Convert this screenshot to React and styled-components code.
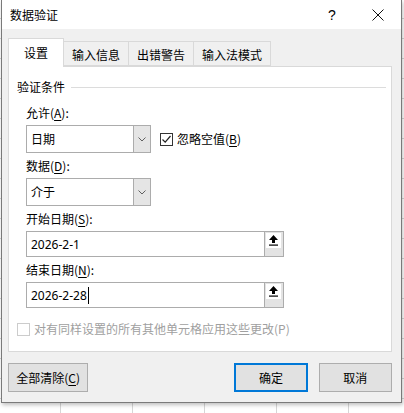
import React from 'react';
import styled, { createGlobalStyle } from 'styled-components';

const GlobalStyle = createGlobalStyle`
  body {
    margin: 0;
    font-family: "Noto Sans CJK SC", "Noto Sans", sans-serif;
    font-size: 12px;
    color: #000;
  }
  * { box-sizing: border-box; }
`;

const Sheet = styled.div`
  width: 404px;
  height: 413px;
  overflow: hidden;
  padding-left: 1px;
  background-color: #fff;
  background-image:
    linear-gradient(to right, #d6d6d6 1px, transparent 1px),
    linear-gradient(to bottom, #d6d6d6 1px, transparent 1px);
  background-size: 72px 20px;
  background-position: 60px 0, 0 18px;
`;

const Dialog = styled.div`
  width: 401px;
  height: 403px;
  display: flex;
  flex-direction: column;
  background: #f0f0f0;
  border: 1px solid #7a7a7a;
  border-top: 0;
  box-shadow: 1px 2px 4px rgba(0, 0, 0, 0.25);
`;

const TitleBar = styled.div`
  height: 29px;
  display: flex;
  align-items: center;
  background: #fff;
  padding-left: 8px;
`;

const Title = styled.div`
  flex: 1;
  line-height: 16px;
`;

const TitleButton = styled.div`
  width: 46px;
  height: 29px;
  display: flex;
  align-items: center;
  justify-content: center;
  font-size: 14px;
  font-family: "Liberation Sans", sans-serif;
`;

const Body = styled.div`
  flex: 1;
  padding: 9px 9px 0 6px;
`;

const TabRow = styled.div`
  display: flex;
  align-items: flex-end;
  height: 28px;
`;

const Tab = styled.div`
  position: relative;
  z-index: ${({ $active }) => ($active ? 1 : 0)};
  height: ${({ $active }) => ($active ? 29 : 25)}px;
  line-height: ${({ $active }) => ($active ? 27 : 25)}px;
  margin-bottom: ${({ $active }) => ($active ? -1 : 0)}px;
  margin-left: ${({ $first }) => ($first ? 0 : -1)}px;
  padding: 0 ${({ $active }) => ($active ? 15 : 8)}px;
  background: ${({ $active }) => ($active ? '#fff' : '#f0f0f0')};
  border: 1px solid #d9d9d9;
  border-bottom: ${({ $active }) => ($active ? 'none' : '1px solid #d9d9d9')};
`;

const Panel = styled.div`
  height: 286px;
  background: #fff;
  border: 1px solid #d9d9d9;
  padding-top: 12px;
`;

const GroupHeader = styled.div`
  display: flex;
  align-items: center;
  gap: 6px;
  padding: 0 5px 0 8px;
  line-height: 16px;
`;

const GroupLine = styled.div`
  flex: 1;
  height: 1px;
  background: #dcdcdc;
`;

const Fields = styled.div`
  padding-left: 17px;
`;

const Label = styled.div`
  line-height: 16px;
  margin-top: ${({ $first }) => ($first ? 10 : 5)}px;
`;

const Key = styled.span`
  text-decoration: underline;
  text-underline-offset: 2px;
`;

const Row = styled.div`
  display: flex;
  align-items: center;
  margin-top: 4px;
`;

const Select = styled.div`
  width: 125px;
  height: 28px;
  display: flex;
  border: 1px solid #acacac;
  background: #fff;
`;

const SelectValue = styled.div`
  flex: 1;
  padding-left: 4px;
  line-height: 26px;
`;

const DropButton = styled.div`
  width: 17px;
  display: flex;
  align-items: center;
  justify-content: center;
  background: #e5e5e5;
  border-left: 1px solid #acacac;
`;

const CheckLabel = styled.div`
  display: flex;
  align-items: center;
  gap: 4px;
  margin-left: ${({ $indent }) => $indent || 0}px;
  line-height: 16px;
  color: ${({ $disabled }) => ($disabled ? '#a0a0a0' : '#000')};
`;

const Box = styled.span`
  width: 13px;
  height: 13px;
  display: flex;
  align-items: center;
  justify-content: center;
  background: #fff;
  border: 1px solid ${({ $disabled }) => ($disabled ? '#cccccc' : '#333')};
`;

const Input = styled.div`
  width: 258px;
  height: 26px;
  display: flex;
  border: 1px solid #acacac;
  background: #fff;
`;

const InputText = styled.div`
  flex: 1;
  display: flex;
  align-items: center;
  padding-left: 4px;
  font-family: "Noto Sans", sans-serif;
  font-size: 12px;
`;

const Caret = styled.span`
  width: 1px;
  height: 17px;
  background: #000;
  margin-left: 1px;
`;

const RangeButton = styled.div`
  width: 19px;
  padding: 1px 2px 0 1px;
  background: #e3e3e3;
  border-left: 1px solid #acacac;
`;

const RangeTile = styled.div`
  height: 15px;
  display: flex;
  align-items: center;
  justify-content: center;
  background: #fff;
`;

const OptionRow = styled.div`
  margin-top: 13px;
  padding-left: 8px;
  display: flex;
`;

const Footer = styled.div`
  display: flex;
  margin-top: 11px;
`;

const Button = styled.div`
  width: ${({ $wide }) => ($wide ? 81 : 74)}px;
  height: 29px;
  display: flex;
  align-items: center;
  justify-content: center;
  background: #e1e1e1;
  border: ${({ $primary }) => ($primary ? '2px solid #0078d7' : '1px solid #adadad')};
  margin-left: ${({ $gap }) => $gap || 0}px;
`;

const Chevron = () => (
  <svg width="8" height="5" viewBox="0 0 8 5">
    <polyline points="0.5,0.5 4,4 7.5,0.5" fill="none" stroke="#606060" strokeWidth="1" />
  </svg>
);

const RangeIcon = () => (
  <svg width="9" height="11" viewBox="0 0 9 11">
    <polygon points="4.5,0 9,5 6,5 6,8 3,8 3,5 0,5" fill="#000" />
    <rect x="0" y="9.5" width="9" height="1.2" fill="#000" />
  </svg>
);

const Check = () => (
  <svg width="11" height="11" viewBox="0 0 11 11">
    <polyline points="1.5,5.5 4.2,8.2 9.5,2" fill="none" stroke="#222" strokeWidth="1.2" />
  </svg>
);

const CloseIcon = () => (
  <svg width="12" height="12" viewBox="0 0 12 12">
    <path d="M0.5 0.5 L11.5 11.5 M11.5 0.5 L0.5 11.5" stroke="#111" strokeWidth="1" />
  </svg>
);

const tabs = ['设置', '输入信息', '出错警告', '输入法模式'];

const DateField = ({ value, caret }) => (
  <Row>
    <Input>
      <InputText>
        {value}
        {caret && <Caret />}
      </InputText>
      <RangeButton>
        <RangeTile><RangeIcon /></RangeTile>
      </RangeButton>
    </Input>
  </Row>
);

const App = () => (
  <>
    <GlobalStyle />
    <Sheet>
      <Dialog>
        <TitleBar>
          <Title>数据验证</Title>
          <TitleButton>?</TitleButton>
          <TitleButton><CloseIcon /></TitleButton>
        </TitleBar>
        <Body>
          <TabRow>
            {tabs.map((t, i) => (
              <Tab key={t} $active={i === 0} $first={i === 0}>{t}</Tab>
            ))}
          </TabRow>
          <Panel>
            <GroupHeader>
              验证条件
              <GroupLine />
            </GroupHeader>
            <Fields>
              <Label $first>允许(<Key>A</Key>):</Label>
              <Row>
                <Select>
                  <SelectValue>日期</SelectValue>
                  <DropButton><Chevron /></DropButton>
                </Select>
                <CheckLabel $indent={9}>
                  <Box><Check /></Box>
                  <span>忽略空值(<Key>B</Key>)</span>
                </CheckLabel>
              </Row>
              <Label>数据(<Key>D</Key>):</Label>
              <Row>
                <Select>
                  <SelectValue>介于</SelectValue>
                  <DropButton><Chevron /></DropButton>
                </Select>
              </Row>
              <Label>开始日期(<Key>S</Key>):</Label>
              <DateField value="2026-2-1" />
              <Label>结束日期(<Key>N</Key>):</Label>
              <DateField value="2026-2-28" caret />
            </Fields>
            <OptionRow>
              <CheckLabel $disabled>
                <Box $disabled />
                <span>对有同样设置的所有其他单元格应用这些更改(P)</span>
              </CheckLabel>
            </OptionRow>
          </Panel>
          <Footer>
            <Button $wide>全部清除(<Key>C</Key>)</Button>
            <Button $primary $gap={146}>确定</Button>
            <Button $gap={11}>取消</Button>
          </Footer>
        </Body>
      </Dialog>
    </Sheet>
  </>
);

export default App;
